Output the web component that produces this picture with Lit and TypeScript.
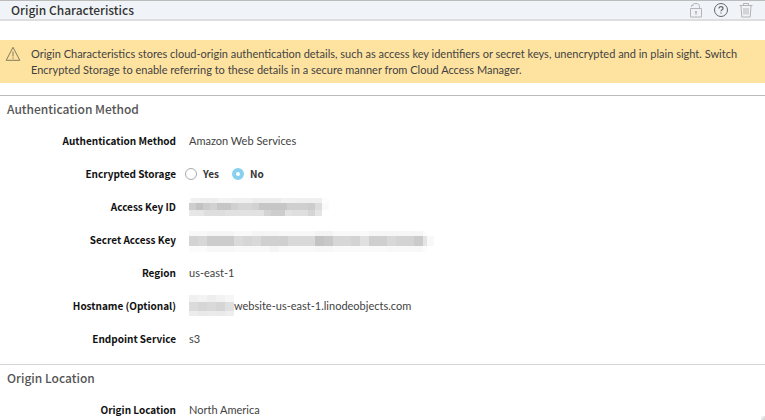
import { LitElement, html, css } from "lit";
import { customElement } from "lit/decorators.js";
import { styleMap } from "lit/directives/style-map.js";

type Strip = { height: number; cells: [number, number][] };

// Each strip lists [width, grey level] cells from left to right.
const ACCESS_KEY: Strip[] = [
  { height: 5, cells: [[2, 250], [9, 240], [18, 238], [14, 242], [21, 240], [28, 236], [14, 241], [27, 239], [7, 253]] },
  { height: 7, cells: [[2, 205], [5, 205], [7, 194], [7, 204], [7, 210], [14, 198], [7, 208], [14, 214], [7, 210], [28, 198], [21, 207], [7, 204], [7, 220], [7, 250]] },
  { height: 6, cells: [[1, 236], [14, 230], [21, 222], [14, 225], [25, 226], [7, 211], [14, 205], [7, 226], [16, 223], [7, 213], [7, 228]] },
];
const SECRET_KEY: Strip[] = [
  { height: 4, cells: [[238, 255]] },
  { height: 5, cells: [[18, 248], [27, 245], [18, 249], [27, 245], [36, 248], [18, 244], [36, 249], [54, 246], [4, 252]] },
  { height: 10, cells: [[9, 211], [9, 215], [27, 204], [9, 218], [9, 214], [9, 217], [27, 208], [27, 217], [9, 195], [9, 200], [18, 215], [9, 211], [9, 224], [18, 207], [9, 216], [18, 211], [9, 203], [4, 228], [7, 248]] },
  { height: 6, cells: [[18, 251], [27, 247], [36, 249], [9, 244], [36, 249], [18, 247], [54, 250], [36, 248], [4, 252]] },
];
const HOST_PREFIX: Strip[] = [
  { height: 7, cells: [[9, 240], [9, 243], [9, 238], [9, 242], [9, 246]] },
  { height: 9, cells: [[9, 219], [9, 214], [9, 217], [9, 213], [9, 224]] },
  { height: 5, cells: [[9, 236], [9, 233], [9, 235], [9, 234], [9, 238]] },
];

@customElement("app-root")
export class AppRoot extends LitElement {
  static styles = css`
    :host {
      display: block;
      position: relative;
      height: 100vh;
      overflow: hidden;
      background: #fff;
      color: #424242;
      font: 11px/16px Lato, "Noto Sans", sans-serif;
    }
    h1, h2, p, dl, dd, dt { margin: 0; }
    h1, h2, dt, .choice { font-family: "Noto Sans CJK SC", "Noto Sans", sans-serif; }
    .header {
      display: flex;
      align-items: center;
      justify-content: space-between;
      height: 18px;
      padding: 0 11px;
      background: #f0f4f8;
      border-top: 1px solid #bbb;
      border-bottom: 2px solid #dedede;
    }
    h1 { font-size: 12px; font-weight: 500; color: #333; }
    .tools { display: flex; gap: 9px; }
    .tool {
      display: flex;
      width: 16px;
      height: 16px;
      padding: 0;
      border: 0;
      background: none;
      color: #666;
    }
    .tool:disabled { color: #b4b4b4; }
    svg { fill: none; stroke: currentColor; flex: none; }
    .notice {
      display: flex;
      gap: 10px;
      margin: 19px 0 12px;
      padding: 6px 8px 5px 5px;
      background: #fee3a0;
    }
    .notice svg { color: #85795c; }
    .section { border-top: 1px solid #bbb; padding-bottom: 9px; }
    .section + .section { border-color: #d4d4d4; }
    h2 {
      padding: 0 7px 2px;
      font-size: 12px;
      line-height: 26px;
      font-weight: 500;
      color: #555;
    }
    .row {
      display: grid;
      grid-template-columns: 176px 1fr;
      column-gap: 13px;
      align-items: center;
      height: 33px;
    }
    dt { text-align: right; font-size: 10px; font-weight: 700; color: #111; }
    dd { display: flex; align-items: center; }
    .choices { display: flex; gap: 13px; margin-left: -4px; }
    .choice { display: flex; align-items: center; gap: 6px; font-size: 10px; font-weight: 700; color: #333; }
    .choice input {
      appearance: none;
      box-sizing: border-box;
      width: 12px;
      height: 12px;
      margin: 0;
      border: 1px solid #aaa;
      border-radius: 50%;
      background: #fff;
    }
    .choice input:checked { border: 4px solid #87d0f0; }
    .strip { display: flex; }
    .corner {
      position: absolute;
      right: 0;
      bottom: 0;
      width: 4px;
      height: 4px;
      background: linear-gradient(135deg, #fff, #ccc);
    }
  `;

  private mosaic(strips: Strip[]) {
    return html`<span role="img" aria-label="Hidden value">${strips.map(
      (s) => html`<span class="strip">${s.cells.map(([w, g]) => html`<span
        style=${styleMap({ width: `${w}px`, height: `${s.height}px`, background: `rgb(${g},${g},${g})` })}></span>`)}</span>`
    )}</span>`;
  }

  private row(label: string, value: unknown) {
    return html`<div class="row"><dt>${label}</dt><dd>${value}</dd></div>`;
  }

  render() {
    return html`
      <header class="header">
        <h1>Origin Characteristics</h1>
        <div class="tools">
          <button class="tool" disabled aria-label="Unlock">
            <svg width="16" height="16" viewBox="0 0 16 16">
              <path d="M2.5 6.500h11v8.500h-11zM3.500 4.800V3.500h1.500V2.200C6 1.500 7 1.500 8 1.500c2.300 0 3.500 1 3.500 3v2M8 10v3"/><circle cx="8" cy="10" r=".8"/>
            </svg>
          </button>
          <button class="tool" aria-label="Help">
            <svg width="16" height="16" viewBox="0 0 16 16">
              <circle cx="8" cy="8" r="6.5"/><path d="M6 6.6C6 5.3 6.900 4.700 8 4.700s2 .7 2 1.700C10 7.700 8 7.800 8 9.300M8 10.400v1.200" stroke-width="1.200"/>
            </svg>
          </button>
          <button class="tool" disabled aria-label="Delete">
            <svg width="16" height="16" viewBox="0 0 16 16">
              <path d="M1.500 3.500h13M5.500 3.500v-2h5v2M3 4l.8 11h8.400L13 4M6 6v6.500M8 6v6.500M10 6v6.500"/>
            </svg>
          </button>
        </div>
      </header>
      <div class="notice" role="note">
        <svg width="16" height="16" viewBox="0 0 16 16">
          <path d="M8 1.300L1.200 14.300h13.600zM8 5.500v5M8 11.500v1.300"/>
        </svg>
        <p>Origin Characteristics stores cloud-origin authentication details, such as access key identifiers or secret keys, unencrypted and in plain sight. Switch Encrypted Storage to enable referring to these details in a secure manner from Cloud Access Manager.</p>
      </div>
      <section class="section">
        <h2>Authentication Method</h2>
        <dl>
          ${this.row("Authentication Method", "Amazon Web Services")}
          ${this.row("Encrypted Storage", html`<div class="choices" role="radiogroup" aria-label="Encrypted Storage">
            <label class="choice"><input type="radio" name="storage" value="yes" />Yes</label>
            <label class="choice"><input type="radio" name="storage" value="no" checked />No</label>
          </div>`)}
          ${this.row("Access Key ID", this.mosaic(ACCESS_KEY))}
          ${this.row("Secret Access Key", this.mosaic(SECRET_KEY))}
          ${this.row("Region", "us-east-1")}
          ${this.row("Hostname (Optional)", html`${this.mosaic(HOST_PREFIX)}website-us-east-1.linodeobjects.com`)}
          ${this.row("Endpoint Service", "s3")}
        </dl>
      </section>
      <section class="section">
        <h2>Origin Location</h2>
        <dl>${this.row("Origin Location", "North America")}</dl>
      </section>
      <span class="corner"></span>
    `;
  }
}
